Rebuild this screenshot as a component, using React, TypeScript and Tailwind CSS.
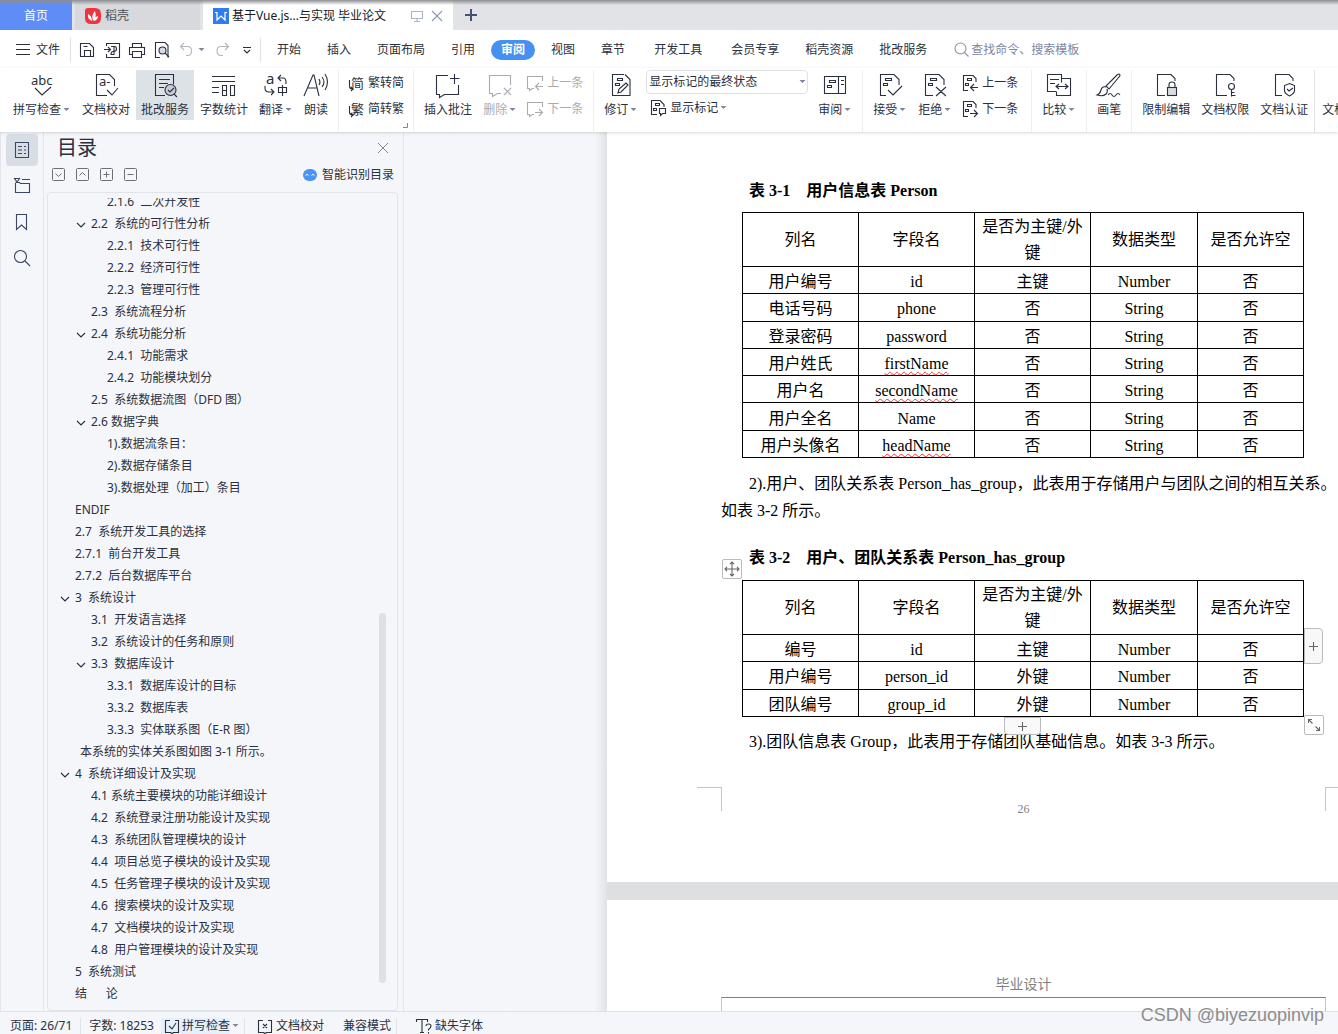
import React from 'react'

const UI = "font-['Noto_Sans','Noto_Sans_CJK_SC',sans-serif]"
const DOC = "font-['Liberation_Serif','Noto_Sans_CJK_SC',serif]"

type SvgProps = { size?: number; className?: string; children: React.ReactNode }

// stroke icon on a grid of size x size pixels
function Svg({ size = 24, className = '', children }: SvgProps) {
  return (
    <svg
      width={size}
      height={size}
      viewBox={`0 0 ${size} ${size}`}
      fill="none"
      stroke="currentColor"
      strokeWidth="1.1"
      aria-hidden="true"
      className={`shrink-0 overflow-visible ${className}`}
    >
      {children}
    </svg>
  )
}

function Glyph({ x, y, size, children }: { x: number; y: number; size: number; children: string }) {
  return (
    <text x={x} y={y} fontSize={size} fill="currentColor" stroke="none">
      {children}
    </text>
  )
}

function Caret() {
  return (
    <svg width="10" height="10" viewBox="0 0 10 10" className="shrink-0 text-[#7d879c]" aria-hidden="true">
      <path d="M2.500 3h6L5.500 6z" fill="currentColor" />
    </svg>
  )
}

const icons = {
  spell: (
    <Svg>
      <Glyph x={1} y={12} size={13}>abc</Glyph>
      <path d="M5 15l7 7 9-8" />
    </Svg>
  ),
  proof: (
    <Svg>
      <path d="M13 22.500H2.500v-21H15.500l5 5V13" />
      <Glyph x={5} y={13} size={13}>a-</Glyph>
      <path d="M13 17l5 5 6-7" />
    </Svg>
  ),
  service: (
    <Svg>
      <path d="M12 22.500H2.500v-21H20.500v10M6 6.500h11M6 10.500h9M6 14.500h5" />
      <circle cx="17.500" cy="17" r="5.500" fill="#c5ccd5" />
      <path d="M15 17l2 2 4-4M21 21l3 3" />
    </Svg>
  ),
  count: (
    <Svg>
      <path d="M0 3.500h23M0 8.500h23M0 14.500h7M0 19.500h7M10.500 12.500h4v10h-4zM10.500 17.500h4M18.500 12.500h4v10h-4z" />
    </Svg>
  ),
  translate: (
    <Svg>
      <Glyph x={2} y={11} size={15}>a</Glyph>
      <path d="M17 2l-3 3 3 3M14 5h5q3 0 3 4v2M1 13v2q0 4 4 4h5M7 16l3 3-3 3" />
      <path d="M14.500 14.500h8v5h-8zM18.500 12v11" />
    </Svg>
  ),
  read: (
    <Svg>
      <path d="M0 23L9 2h1l5 21M4 15h9M15 6q2 3 0 6M18 4q4 5 0 10M21 1q5 8 0 16" />
    </Svg>
  ),
  addNote: (
    <Svg>
      <path d="M12 2.500H.500v19h3v3l5-3H22.500V12M18.500 1v10M14 5.500h9.500" />
    </Svg>
  ),
  delNote: (
    <Svg>
      <path d="M22.500 12V2.500H1.500v18h3v3l5-3H13M16 15l7 7M23 15l-7 7" />
    </Svg>
  ),
  revise: (
    <Svg>
      <path d="M15 1.500H3.500v21h17.500V6.500L16 1.500" />
      <path d="M8.500 5.500h5v2h-5zM6.500 10.500h4v2h-4zM9 20l1-4 7-6 2 2-7 7z" />
    </Svg>
  ),
  review: (
    <Svg>
      <path d="M1.500 3.500h21v17h-21zM15.500 3.500v17M18 7.500h3M18 11.500h3M6.500 7.500h6v2h-6zM4.500 12.500h4v2h-4z" />
    </Svg>
  ),
  accept: (
    <Svg>
      <path d="M8 22.500H2.500v-21H16l5 5V12M7.500 5.500h6v2h-6zM5.500 10.500h4v2h-4zM10 17l5 5 9-9" />
    </Svg>
  ),
  reject: (
    <Svg>
      <path d="M10 22.500H2.500v-21H16l5 5V12M7.500 5.500h6v2h-6zM5.500 10.500h4v2h-4zM13 14l10 9M23 14l-10 9" />
    </Svg>
  ),
  compare: (
    <Svg>
      <path d="M9 18.500H.500v-17h14v8M3 6.500h9M3 10.500h5M15 5.500h8.500v17h-14v-4M9 13.500h12M12 11l-3 2.500 3 2.500M18 11l3 2.500-3 2.500" />
    </Svg>
  ),
  brush: (
    <Svg>
      <path d="M22 1q2 1 0 3L12 16l-3-3L20 2q1-1 2-1zM9 14q-4-1-5 3t-4 5q6 2 9-1 2-2 1-5M11 22q2-3 4 0t4 0 4 0" />
    </Svg>
  ),
  lock: (
    <Svg>
      <path d="M11 22.500H3.500v-21H17l4 4V8" />
      <rect x="13.500" y="14.500" width="9" height="8" fill="#d9dce2" />
      <path d="M15 14v-2.500q0-2.500 3-2.500t3 2.500V14" />
    </Svg>
  ),
  rights: (
    <Svg>
      <path d="M14 22.500H3.500v-21H17l4 4V8" />
      <circle cx="18.500" cy="13.500" r="3" />
      <path d="M18.500 16.500v7M18.500 19.500h3M18.500 22.500h4" />
    </Svg>
  ),
  cert: (
    <Svg>
      <path d="M10 22.500H3.500v-21H17l4 4V8M17.500 10.500l5 2v5q0 3-5 5.500-5-2.500-5-5.500v-5zM15 16l2 2 4-3" />
    </Svg>
  ),
  toSimple: (
    <Svg size={16}>
      <Glyph x={3} y={13} size={13}>简</Glyph>
      <path d="M1.500 5v6q0 3 3 3M3 12l2 2-2 2" />
    </Svg>
  ),
  toTrad: (
    <Svg size={16}>
      <Glyph x={3} y={13} size={13}>繁</Glyph>
      <path d="M1.500 5v6q0 3 3 3M3 12l2 2-2 2" />
    </Svg>
  ),
  notePrev: (
    <Svg size={16}>
      <path d="M15.500 6V1.500H.500v12h2v2l3-2H7M16 11.500H9M12 8l-3.500 3.500L12 15" />
    </Svg>
  ),
  noteNext: (
    <Svg size={16}>
      <path d="M15.500 6V1.500H.500v12h2v2l3-2H7M8 11.500h8M12 8l3.500 3.500L12 15" />
    </Svg>
  ),
  changePrev: (
    <Svg size={16}>
      <path d="M6 15.500H1.500v-15H11l3 3V7M5.500 3.500h4v2h-4zM3.500 8.500h3v2h-3zM16 12.500H9M12 9l-3.500 3.500L12 16" />
    </Svg>
  ),
  changeNext: (
    <Svg size={16}>
      <path d="M6 15.500H1.500v-15H11l3 3V7M5.500 3.500h4v2h-4zM3.500 8.500h3v2h-3zM8 12.500h7M12 9l3.500 3.500L12 16" />
    </Svg>
  ),
  marks: (
    <Svg size={16}>
      <path d="M7 14.500H1.500v-14H10l4 4V7M5.500 3.500h4v2h-4zM3.500 8.500h3v2h-3zM9.500 8.500h6v5h-3l-2 2v-2h-1z" />
    </Svg>
  ),
}

type IconName = keyof typeof icons

function BigButton({ icon, label, caret, active, disabled }: {
  icon: IconName
  label: string
  caret?: boolean
  active?: boolean
  disabled?: boolean
}) {
  return (
    <button
      disabled={disabled}
      className={`flex h-[50px] shrink-0 flex-col items-center gap-1 px-[5px] pt-[3px] ${active ? 'bg-[#dde2e7]' : ''} ${disabled ? 'text-[#a9abb0]' : ''}`}
    >
      {icons[icon]}
      <span className="flex items-center leading-[18px] whitespace-nowrap">
        {label}
        {caret && <Caret />}
      </span>
    </button>
  )
}

function SmallButton({ icon, label, caret, disabled }: {
  icon: IconName
  label: string
  caret?: boolean
  disabled?: boolean
}) {
  return (
    <button
      disabled={disabled}
      className={`flex h-6 items-center gap-1 pr-[5px] pl-1 whitespace-nowrap ${disabled ? 'text-[#a9abb0]' : ''}`}
    >
      {icons[icon]}
      <span className="flex items-center">
        {label}
        {caret && <Caret />}
      </span>
    </button>
  )
}

function Divider() {
  return <span className="mx-1 h-[62px] w-px shrink-0 self-start bg-[#eceef1]" />
}

function TitleTabs() {
  return (
    <div className="relative flex h-[30px] shrink-0 gap-[3px] bg-[#e2e3e7]">
      <button className="w-[72px] bg-[#5f8df8] pt-px text-white">首页</button>
      <button className="flex w-[125px] items-center gap-1 bg-[#d8d9dc] pt-px pl-[10px] text-[#4b4f58]">
        <svg width="16" height="16" viewBox="0 0 16 16" aria-hidden="true">
          <path d="M0 3q0-3 3-3h7q6 0 6 6v4q0 6-6 6H6q-6 0-6-6z" fill="#ef3340" />
          <path d="M8 13Q6 7 10 3q2 6-2 10M7 13Q2 11 3 6q4 2 4 7M9 13q0-4 4-5 0 4-4 5" fill="#fff" />
        </svg>
        稻壳
      </button>
      <div className="flex w-[250px] items-center bg-white pt-px pl-[10px] text-[#15181f]">
        <svg width="16" height="16" viewBox="0 0 16 16" aria-hidden="true">
          <rect width="16" height="16" fill="#2f7bf0" />
          <path d="M2 4.500h2V12l4-4 4 4V4.500h2" fill="none" stroke="#fff" strokeWidth="1.200" />
        </svg>
        <span className="ml-[3px] flex-1 whitespace-nowrap">基于Vue.js...与实现 毕业论文</span>
        <button aria-label="窗口" className="text-[#aab4c8]">
          <Svg size={12}>
            <path d="M.500 1.500h11v7H.500zM6 9v2M3 11.500h6" />
          </Svg>
        </button>
        <button aria-label="关闭" className="mr-[10px] ml-2 text-[#8c98b3]">
          <Svg size={12}>
            <path d="M1 1l10 10M11 1L1 11" />
          </Svg>
        </button>
      </div>
      <button aria-label="新建" className="ml-2 text-[#46536f]">
        <Svg size={14}>
          <path d="M7 1v12M1 7h12" strokeWidth="2" />
        </Svg>
      </button>
      <div className="pointer-events-none absolute inset-x-0 top-0 h-[5px] bg-linear-to-b from-[#8d8e91] to-transparent" />
    </div>
  )
}

const menuGroups = [
  ['开始', '插入', '页面布局', '引用', '审阅', '视图', '章节'],
  ['开发工具'],
  ['会员专享', '稻壳资源', '批改服务'],
]

function MenuBar() {
  return (
    <div className="flex h-[38px] shrink-0 items-center bg-white pt-px">
      <button className="flex items-center gap-[5px] pl-4">
        <Svg size={15}>
          <path d="M0 2.500h14M0 7.500h14M0 12.500h14" />
        </Svg>
        文件
      </button>
      <span className="ml-[10px] h-6 w-px bg-[#dfe2e7]" />
      <div className="flex items-center gap-[9px] pl-2">
        <button aria-label="保存">
          <Svg size={16}>
            <path d="M5.500 14.500h-4v-13h9l4 4v9h-9v-6h6v6M4.500 4.500h4" />
          </Svg>
        </button>
        <button aria-label="输出为PDF">
          <Svg size={16}>
            <path d="M2.500 4V1.500h13v14h-13V12M0 7.500h6M4 5l2.500 2.500L4 10M7 4.500h3.500q2 0 2 2.500t-3 2.500H9q-2 0-2 3h3V5" />
          </Svg>
        </button>
        <button aria-label="打印">
          <Svg size={16}>
            <path d="M3.500 5V1.500h9V5M3.500 12.500h-3v-7h15v7h-3M3.500 9.500h9v6h-9z" />
          </Svg>
        </button>
        <button aria-label="打印预览">
          <Svg size={16}>
            <path d="M6 15.500H1.500v-15H11l3 3V15.500" />
            <circle cx="8.500" cy="8.500" r="3.500" fill="#d9dce2" />
            <path d="M11 11l4 4" />
          </Svg>
        </button>
        <button aria-label="撤销" disabled className="flex items-center gap-[1px] text-[#b1b5bd]">
          <Svg size={16}>
            <path d="M5 1L1.500 4.500 5 8M1.500 4.500h7q4 0 4 4.500t-4 4.500H7" />
          </Svg>
          <Caret />
        </button>
        <button aria-label="重做" disabled className="text-[#b1b5bd]">
          <Svg size={16}>
            <path d="M10 1l3.500 3.500L10 8M13.500 4.500H6Q2 4.500 2 9t4 4.500h2" />
          </Svg>
        </button>
        <button aria-label="更多" className="pl-[2px]">
          <Svg size={10}>
            <path d="M1 2.500h8M2 5l3 3 3-3" />
          </Svg>
        </button>
      </div>
      <span className="ml-2 h-6 w-px bg-[#dfe2e7]" />
      <nav className="ml-[3px] flex gap-[3px]">
        {menuGroups.map((group) => (
          <div key={group[0]} className="flex">
            {group.map((name) =>
              name === '审阅' ? (
                <button key={name} className="mx-[3px] h-5 rounded-full bg-[#4690f2] px-[10px] font-bold text-white">
                  {name}
                </button>
              ) : (
                <button key={name} className="px-[13px] whitespace-nowrap">
                  {name}
                </button>
              ),
            )}
          </div>
        ))}
      </nav>
      <label className="ml-[14px] flex flex-1 items-center gap-[2px] text-[#8a94ab]">
        <Svg size={15}>
          <circle cx="6.500" cy="6.500" r="5.500" />
          <path d="M10.500 10.500l4 4" />
        </Svg>
        <input
          aria-label="查找"
          placeholder="查找命令、搜索模板"
          className="w-full bg-transparent outline-none placeholder:text-[#7d879e]"
        />
      </label>
    </div>
  )
}

function Ribbon() {
  return (
    <div className="relative z-10 flex h-16 shrink-0 items-start gap-px overflow-hidden bg-white pt-[2px] pl-2 shadow-[0_1px_3px_rgba(0,0,0,0.15)]">
      <BigButton icon="spell" label="拼写检查" caret />
      <BigButton icon="proof" label="文档校对" />
      <BigButton icon="service" label="批改服务" active />
      <BigButton icon="count" label="字数统计" />
      <BigButton icon="translate" label="翻译" caret />
      <BigButton icon="read" label="朗读" />
      <Divider />
      <div className="flex flex-col gap-[2px] pt-px">
        <SmallButton icon="toSimple" label="繁转简" />
        <SmallButton icon="toTrad" label="简转繁" />
      </div>
      <svg width="5" height="5" viewBox="0 0 5 5" className="mb-1 -ml-[7px] shrink-0 self-end text-[#7d879c]" aria-hidden="true">
        <path d="M0 4.500h4.500V0" fill="none" stroke="currentColor" />
      </svg>
      <Divider />
      <BigButton icon="addNote" label="插入批注" />
      <BigButton icon="delNote" label="删除" caret disabled />
      <div className="flex flex-col gap-[2px] pt-px">
        <SmallButton icon="notePrev" label="上一条" disabled />
        <SmallButton icon="noteNext" label="下一条" disabled />
      </div>
      <Divider />
      <BigButton icon="revise" label="修订" caret />
      <div className="mr-1 ml-[2px] flex shrink-0 flex-col gap-[2px]">
        <div className="relative flex items-center">
          <select
            aria-label="显示方式"
            className="h-6 w-[162px] appearance-none rounded-sm border border-[#dfe1e5] bg-white pl-[2px] outline-none"
          >
            <option>显示标记的最终状态</option>
          </select>
          <span className="pointer-events-none absolute right-[1px]">
            <Caret />
          </span>
        </div>
        <SmallButton icon="marks" label="显示标记" caret />
      </div>
      <BigButton icon="review" label="审阅" caret />
      <Divider />
      <BigButton icon="accept" label="接受" caret />
      <BigButton icon="reject" label="拒绝" caret />
      <div className="flex flex-col gap-[2px] pt-px pr-[3px]">
        <SmallButton icon="changePrev" label="上一条" />
        <SmallButton icon="changeNext" label="下一条" />
      </div>
      <Divider />
      <BigButton icon="compare" label="比较" caret />
      <Divider />
      <BigButton icon="brush" label="画笔" />
      <Divider />
      <BigButton icon="lock" label="限制编辑" />
      <BigButton icon="rights" label="文档权限" />
      <BigButton icon="cert" label="文档认证" />
      <span className="h-[62px] w-px shrink-0 bg-[#dfe2e7]" />
      <button className="shrink-0 self-start pt-[31px] pl-[6px] leading-[18px] whitespace-nowrap">文档</button>
    </div>
  )
}

function Rail() {
  return (
    <div className="flex w-11 shrink-0 flex-col items-center gap-1 border-x border-[#e3e5ea] pt-[2px] text-[#3b4763]">
      <button aria-label="目录" className="grid size-8 place-items-center rounded-sm bg-[#d9dee6]">
        <Svg size={16}>
          <path d="M1.500.500h13v15h-13zM4 4.500h4M10 4.500h2M4 8h4M10 8h2M4 11.500h4M10 11.500h2" />
        </Svg>
      </button>
      <button aria-label="章节" className="grid size-8 place-items-center">
        <Svg size={16}>
          <path d="M.500.500h5L3 4zM8 1.500h8M1.500 5v9.500h14v-9h-9l-1-1h-4" />
        </Svg>
      </button>
      <button aria-label="书签" className="grid size-8 place-items-center">
        <Svg size={16}>
          <path d="M2.500.500h10v15l-5-4.500-5 4.500z" />
        </Svg>
      </button>
      <button aria-label="查找" className="grid size-8 place-items-center">
        <Svg size={16}>
          <circle cx="6.500" cy="6.500" r="6" />
          <path d="M11 11l5 5" />
        </Svg>
      </button>
    </div>
  )
}

type Entry = { text: string; level: 1 | 2 | 3 | 4; open?: boolean }

const toc: Entry[] = [
  { text: '2.1.6  二次开发性', level: 3 },
  { text: '2.2  系统的可行性分析', level: 2, open: true },
  { text: '2.2.1  技术可行性', level: 3 },
  { text: '2.2.2  经济可行性', level: 3 },
  { text: '2.2.3  管理可行性', level: 3 },
  { text: '2.3  系统流程分析', level: 2 },
  { text: '2.4  系统功能分析', level: 2, open: true },
  { text: '2.4.1  功能需求', level: 3 },
  { text: '2.4.2  功能模块划分', level: 3 },
  { text: '2.5  系统数据流图（DFD 图）', level: 2 },
  { text: '2.6 数据字典', level: 2, open: true },
  { text: '1).数据流条目：', level: 3 },
  { text: '2).数据存储条目', level: 3 },
  { text: '3).数据处理（加工）条目', level: 3 },
  { text: 'ENDIF', level: 1 },
  { text: '2.7  系统开发工具的选择', level: 1 },
  { text: '2.7.1  前台开发工具', level: 1 },
  { text: '2.7.2  后台数据库平台', level: 1 },
  { text: '3  系统设计', level: 1, open: true },
  { text: '3.1  开发语言选择', level: 2 },
  { text: '3.2  系统设计的任务和原则', level: 2 },
  { text: '3.3  数据库设计', level: 2, open: true },
  { text: '3.3.1  数据库设计的目标', level: 3 },
  { text: '3.3.2  数据库表', level: 3 },
  { text: '3.3.3  实体联系图（E-R 图）', level: 3 },
  { text: '本系统的实体关系图如图 3-1 所示。', level: 4 },
  { text: '4  系统详细设计及实现', level: 1, open: true },
  { text: '4.1 系统主要模块的功能详细设计', level: 2 },
  { text: '4.2  系统登录注册功能设计及实现', level: 2 },
  { text: '4.3  系统团队管理模块的设计', level: 2 },
  { text: '4.4  项目总览子模块的设计及实现', level: 2 },
  { text: '4.5  任务管理子模块的设计及实现', level: 2 },
  { text: '4.6  搜索模块的设计及实现', level: 2 },
  { text: '4.7  文档模块的设计及实现', level: 2 },
  { text: '4.8  用户管理模块的设计及实现', level: 2 },
  { text: '5  系统测试', level: 1 },
  { text: '结      论', level: 1 },
]

const indent = { 1: 'pl-[11px]', 2: 'pl-[27px]', 3: 'pl-[43px]', 4: 'pl-4' }

function TocPanel() {
  return (
    <aside className="flex w-[360px] shrink-0 flex-col border-r border-[#e3e5ea] pr-[5px] pl-[3px]">
      <div className="flex h-[30px] items-center justify-between pt-px pr-[9px] pl-[10px]">
        <h2 className="text-xl leading-[30px]">目录</h2>
        <button aria-label="关闭目录" className="text-[#7d879c]">
          <Svg size={12}>
            <path d="M1 1l10 10M11 1L1 11" strokeWidth="1" />
          </Svg>
        </button>
      </div>
      <div className="flex h-[24px] items-center gap-[10px] pt-px pr-1 pl-[5px] text-[#6b7078]">
        {[
          ['展开', 'M4 6l3 3 3-3'],
          ['收起', 'M4 8l3-3 3 3'],
          ['增加级别', 'M4 7h6M7 4v6'],
          ['减少级别', 'M4 7h6'],
        ].map(([name, d]) => (
          <button key={name} aria-label={name}>
            <Svg size={14}>
              <rect x="0.500" y="0.500" width="12" height="12" rx="1" strokeWidth="1" />
              <path d={d} transform="translate(-0.500 -0.500)" strokeWidth="1" />
            </Svg>
          </button>
        ))}
        <button className="ml-auto flex items-center gap-[5px] text-[#2a3040]">
          <svg width="14" height="12" viewBox="0 0 14 12" aria-hidden="true">
            <rect width="14" height="12" rx="6" fill="#4a94f3" />
            <path d="M2.500 6.500Q4 4 5.500 6.500M8.500 6.500Q10 4 11.500 6.500" fill="none" stroke="#fff" />
          </svg>
          智能识别目录
        </button>
      </div>
      <div className="relative mt-[6px] min-h-0 flex-1 rounded-sm border border-[#e1e4e9] pt-[5px]">
        <ul className="h-full overflow-hidden">
          {toc.map((e, i) => (
            <li key={e.text} className={`flex h-[22px] items-center ${indent[e.level]} ${i === 0 ? '-mt-[7px]' : ''}`}>
              <span className="flex w-4 shrink-0">
                {e.open && (
                  <button aria-label="折叠">
                    <Svg size={12}>
                      <path d="M2 5l4 4 4-4" />
                    </Svg>
                  </button>
                )}
              </span>
              <a href="#" className="whitespace-pre">
                {e.text}
              </a>
            </li>
          ))}
        </ul>
        <div className="absolute right-[11px] bottom-[27px] h-[370px] w-[7px] rounded-full bg-[#dde1e5]" />
      </div>
    </aside>
  )
}

const personRows = [
  ['用户编号', 'id', '主键', 'Number', '否'],
  ['电话号码', 'phone', '否', 'String', '否'],
  ['登录密码', 'password', '否', 'String', '否'],
  ['用户姓氏', 'firstName', '否', 'String', '否'],
  ['用户名', 'secondName', '否', 'String', '否'],
  ['用户全名', 'Name', '否', 'String', '否'],
  ['用户头像名', 'headName', '否', 'String', '否'],
]

const groupRows = [
  ['编号', 'id', '主键', 'Number', '否'],
  ['用户编号', 'person_id', '外键', 'Number', '否'],
  ['团队编号', 'group_id', '外键', 'Number', '否'],
]

const misspelled = ['firstName', 'secondName', 'headName']

function FieldTable({ rows, className }: { rows: string[][]; className: string }) {
  return (
    <table className={`w-[562px] table-fixed border-collapse text-center ${className}`}>
      <colgroup>
        <col className="w-[116px]" />
        <col className="w-[116px]" />
        <col className="w-[116px]" />
        <col className="w-[107px]" />
        <col className="w-[106px]" />
      </colgroup>
      <thead>
        <tr className="h-[54px]">
          {['列名', '字段名', '是否为主键/外键', '数据类型', '是否允许空'].map((h) => (
            <th key={h} className="border border-black px-1 pt-px pb-0 leading-[26px] font-normal">
              {h}
            </th>
          ))}
        </tr>
      </thead>
      <tbody>
        {rows.map((row) => (
          <tr key={row[0]}>
            {row.map((cell, i) => (
              <td key={i} className="border border-black px-0 pt-[3px] pb-0 leading-[23px]">
                {misspelled.includes(cell) ? (
                  <span className="underline decoration-red-500 decoration-wavy decoration-1 underline-offset-2">{cell}</span>
                ) : (
                  cell
                )}
              </td>
            ))}
          </tr>
        ))}
      </tbody>
    </table>
  )
}

const handle = 'absolute grid place-items-center border border-[#b9bbbe] text-[#666]'

function DocumentView() {
  return (
    <main className="flex min-w-0 flex-1 bg-[#f5f6f9]">
      <div className="w-[203px] shrink-0 bg-linear-to-r from-[#f5f6f9] from-94% to-[#e0e2e5]" />
      <div className={`flex min-w-0 flex-1 flex-col overflow-hidden bg-[#dddfe1] text-base text-black ${DOC}`}>
        <section className="h-[750px] shrink-0 bg-white pt-[45px] pr-3 pl-[114px] leading-[27px]">
          <h3 className="mb-2 pl-7 font-bold whitespace-pre">表 3-1    用户信息表 Person</h3>
          <div className="pl-[21px]">
            <FieldTable rows={personRows} className="h-[246px]" />
          </div>
          <p className="mt-3 indent-7 whitespace-nowrap">
            2).用户、团队关系表 Person_has_group，此表用于存储用户与团队之间的相互关系。
            <br />
            如表 3-2 所示。
          </p>
          <h3 className="mt-5 mb-[9px] pl-7 font-bold whitespace-pre">表 3-2    用户、团队关系表 Person_has_group</h3>
          <div className="pl-[21px]">
            <div className="relative w-[562px]">
              <FieldTable rows={groupRows} className="h-[137px]" />
              <button aria-label="移动表格" className={`${handle} -top-[21px] -left-5 size-5 rounded-xs bg-white`}>
                <Svg size={16}>
                  <path d="M8 1v14M1 8h14M6 3l2-2 2 2M6 13l2 2 2-2M3 6L1 8l2 2M13 6l2 2-2 2" />
                </Svg>
              </button>
              <button aria-label="添加列" className={`${handle} top-12 -right-[19px] h-9 w-[19px] rounded-r bg-[#f8f8f8]`}>
                <Svg size={11}>
                  <path d="M5.500 1v9M1 5.500h9" />
                </Svg>
              </button>
              <button aria-label="添加行" className={`${handle} top-[137px] left-[262px] h-[18px] w-[37px] rounded-b bg-[#f8f8f8]/80`}>
                <Svg size={11}>
                  <path d="M5.500 1v9M1 5.500h9" />
                </Svg>
              </button>
              <button aria-label="缩放表格" className={`${handle} top-[135px] -right-5 size-5 rounded-xs bg-white`}>
                <Svg size={14}>
                  <path d="M1.500 5V1.500H5M1.500 1.500l4 4M12.500 9v3.500H9M12.500 12.500l-4-4" />
                </Svg>
              </button>
            </div>
          </div>
          <p className="mt-[11px] indent-7 whitespace-nowrap">3).团队信息表 Group，此表用于存储团队基础信息。如表 3-3 所示。</p>
          <div className="mt-8 -mr-3 -ml-6 flex justify-between">
            <span className="h-6 w-[25px] border-t border-r border-[#c4c4c4]" />
            <span className="h-6 w-[13px] border-t border-l border-[#c4c4c4]" />
          </div>
          <div className="-mt-3 text-center text-xs leading-5 text-[#808080]">26</div>
        </section>
        <section className="mt-[18px] flex-1 bg-white pt-[73px] pr-3 pl-[114px] text-center text-sm text-[#808080]">
          <div className="leading-6">毕业设计</div>
          <div className="h-[14px] border-x border-t border-x-[#c4c4c4] border-t-[#808080]" />
        </section>
      </div>
    </main>
  )
}

function StatusBar() {
  return (
    <footer className="flex h-[23px] shrink-0 items-center border-t border-[#e0e2e6] bg-[#f5f6f9] pt-[6px] pl-[10px] leading-4">
      <button>页面: 26/71</button>
      <span className="mx-2 h-4 w-px bg-[#dfe2e7]" />
      <button>字数: 18253</button>
      <button className="ml-[7px] flex items-center gap-[2px] bg-[#e6f0fb] pl-[3px]">
        <Svg size={16}>
          <path d="M6 2.500H1.500v12h5l1.500 1 1.500-1h5v-12H11M5 8l3 3 4-6" />
        </Svg>
        拼写检查
      </button>
      <Caret />
      <span className="mx-1 h-4 w-px bg-[#dfe2e7]" />
      <button className="ml-2 flex items-center gap-[3px]">
        <Svg size={16}>
          <path d="M6 2.500H1.500v12h5l1.500 1 1.500-1h5v-12H11M6 6l4 4M10 6l-4 4" />
        </Svg>
        文档校对
      </button>
      <button className="ml-[19px]">兼容模式</button>
      <span className="mx-[5px] h-4 w-px bg-[#dfe2e7]" />
      <button className="ml-[14px] flex items-center gap-[3px]">
        <Svg size={16}>
          <path d="M.500 4V1.500h11V4M6 1.500v13M4 14.500h4M10 8q0-2 2.500-2t2.500 2-2.500 3.500v1M12.500 14v1.500" />
        </Svg>
        缺失字体
      </button>
    </footer>
  )
}

export default function App() {
  return (
    <div className={`relative flex h-screen flex-col overflow-hidden bg-[#f5f6f9] text-xs text-[#2a3040] ${UI}`}>
      <TitleTabs />
      <MenuBar />
      <Ribbon />
      <div className="flex min-h-0 flex-1">
        <Rail />
        <TocPanel />
        <DocumentView />
      </div>
      <StatusBar />
      <div className="pointer-events-none absolute right-[14px] bottom-[7px] z-20 font-['Liberation_Sans',sans-serif] text-lg leading-6 text-[#8b8d90]">
        CSDN @biyezuopinvip
      </div>
    </div>
  )
}
